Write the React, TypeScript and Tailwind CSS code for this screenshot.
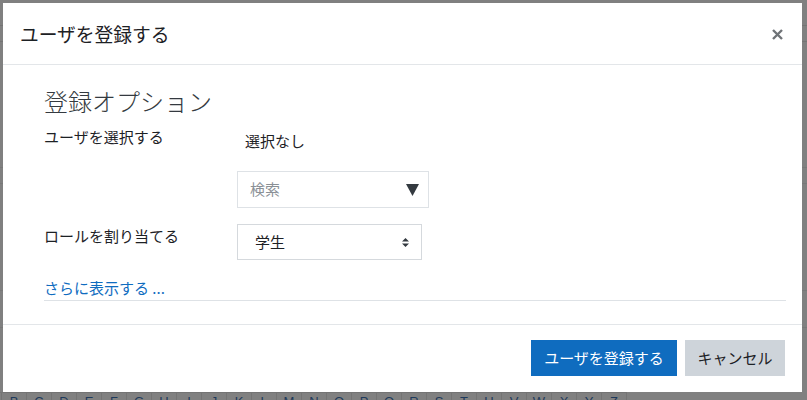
import React from "react";

const letters = "ABCDEFGHIJKLMNOPQRSTUVWXYZ".split("");

export default function App() {
  return (
    <div
      className="relative w-[807px] h-[400px] overflow-hidden bg-[#808080]"
      style={{ fontFamily: '"Noto Sans CJK JP", "Noto Sans", sans-serif' }}
    >
      {/* covered page content */}
      <div className="absolute left-0 top-[25px] w-full h-px bg-[#747474]" />
      <div className="absolute left-0 top-[41px] w-full h-px bg-[#747474]" />
      <div className="absolute left-0 top-[167px] w-full h-px bg-[#787878]" />
      <div className="absolute left-0 top-[183px] w-full h-px bg-[#787878]" />
      <div className="absolute left-0 top-[290px] w-full h-px bg-[#787878]" />
      <div className="absolute left-0 top-[327px] w-full h-px bg-[#787878]" />
      <div className="absolute left-[-23px] top-[392px] flex h-[30px] border-t border-[#747474]">
        {letters.map((l) => (
          <div
            key={l}
            className="w-[25px] flex justify-center border-r border-[#747474] pt-[1px] text-[13px] leading-[16px] text-[#1e3a5c]"
            style={{ fontFamily: '"Liberation Sans", sans-serif' }}
          >
            {l}
          </div>
        ))}
      </div>

      {/* modal */}
      <div className="absolute left-[3px] top-[3px] w-[799px] h-[389px] bg-white flex flex-col text-[#1d2125]">
        <div className="h-[62px] shrink-0 flex items-center justify-between pl-[17px] pr-[19px] border-b border-[#e3e6e9]">
          <div className="text-[18.75px] leading-[22px]">ユーザを登録する</div>
          <svg width="11" height="11" viewBox="0 0 11 11" className="mt-[2px]">
            <path d="M1 1 L10 10 M10 1 L1 10" stroke="#6f7377" strokeWidth="2.4" strokeLinecap="butt" />
          </svg>
        </div>

        <div className="h-[260px] shrink-0 pl-[41px] pr-[16px] border-b border-[#e3e6e9] flex flex-col">
          <div className="mt-[21px] text-[24px] leading-[29px] font-light text-[#343a40]">登録オプション</div>
          <div className="flex mt-[11px]">
            <div className="w-[193px] text-[15px] leading-[22px]">ユーザを選択する</div>
            <div className="flex flex-col">
              <div className="pl-[8px] pt-[4px] text-[15px] leading-[22px]">選択なし</div>
              <div className="mt-[19px] w-[192px] h-[37px] border border-[#dee2e6] flex items-center justify-between pl-[12px] pr-[9px]">
                <span className="text-[15px] text-[#8a9096]">検索</span>
                <svg width="13" height="12" viewBox="0 0 13 12">
                  <path d="M0 0 H13 L6.5 12 Z" fill="#343a40" />
                </svg>
              </div>
            </div>
          </div>
          <div className="flex mt-[16px]">
            <div className="w-[193px] pt-[1px] text-[15px] leading-[22px]">ロールを割り当てる</div>
            <div className="w-[185px] h-[36px] border border-[#d5d9dd] flex items-center justify-between pl-[17px] pr-[12px]">
              <span className="text-[15px]">学生</span>
              <svg width="7" height="9" viewBox="0 0 7 9">
                <path d="M0 3.5 L3.5 0 L7 3.5 Z M0 5.5 L3.5 9 L7 5.5 Z" fill="#343a40" />
              </svg>
            </div>
          </div>
          <div className="mt-[17px] border-b border-[#dee2e6] pb-[1px] text-[15px] leading-[22px] text-[#0f6cbf]">
            さらに表示する ...
          </div>
        </div>

        <div className="flex-1 flex items-center justify-end gap-[8px] pr-[17px] pb-[1px]">
          <div className="w-[146px] h-[36px] bg-[#0f6cbf] text-white text-[15px] flex items-center justify-center">
            ユーザを登録する
          </div>
          <div className="w-[100px] h-[36px] bg-[#ced4da] text-[#1d2125] text-[15px] flex items-center justify-center">
            キャンセル
          </div>
        </div>
      </div>
    </div>
  );
}
